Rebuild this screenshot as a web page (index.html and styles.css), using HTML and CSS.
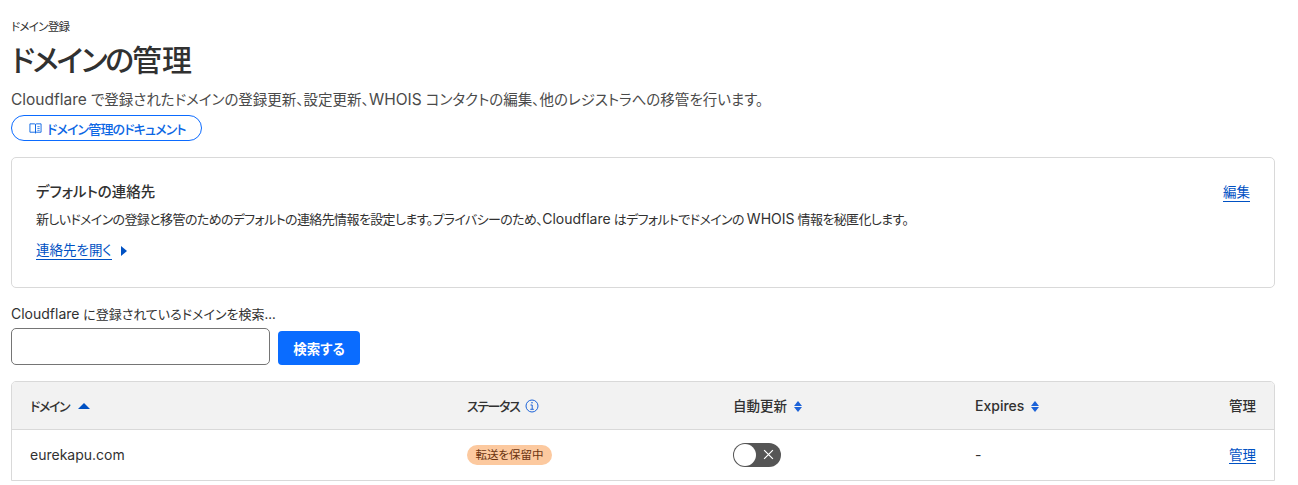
FILE: index.html
```html
<!DOCTYPE html>
<html lang="ja">
<head>
    <meta charset="UTF-8">
    <title>ドメインの管理</title>
    <link rel="stylesheet" href="styles.css">
</head>
<body>
    <p class="eyebrow">ドメイン登録</p>
    <h1><span class="kana">ドメインの</span>管理</h1>
    <p class="lead"><span class="en">Cloudflare</span> で登録されたドメインの登録更新、設定更新、<span class="en">WHOIS</span> コンタクトの編集、他のレジストラへの移管を行います。</p>
    <a class="doc-pill" href="#">
        <svg class="book-icon" viewBox="0 0 14 14" width="13" height="13" fill="none" stroke="#0b66e4" stroke-width="1">
            <path d="M1 2h5a1 1 0 0 1 1 1v9a1 1 0 0 0-1-1H1z"/>
            <path d="M13 2H8a1 1 0 0 0-1 1v9a1 1 0 0 1 1-1h5z"/>
            <path d="M9 5h2.500M9 7h2.500M9 9h2.500" stroke-width=".8"/>
        </svg>
        <span>ドメイン管理のドキュメント</span>
    </a>

    <section class="contact-card">
        <div class="contact-body">
            <h2>デフォルトの連絡先</h2>
            <p>新しいドメインの登録と移管のためのデフォルトの連絡先情報を設定します。プライバシーのため、<span class="en">Cloudflare</span> はデフォルトでドメインの <span class="en">WHOIS</span> 情報を秘匿化します。</p>
            <div class="open-row">
                <a class="link" href="#">連絡先を開く</a>
                <span class="caret-right"></span>
            </div>
        </div>
        <a class="link edit-link" href="#">編集</a>
    </section>

    <form class="search">
        <label for="domainSearch"><span class="en">Cloudflare</span> に登録されているドメインを検索...</label>
        <div class="search-row">
            <input id="domainSearch" type="text">
            <button type="button">検索する</button>
        </div>
    </form>

    <div class="table-wrap">
        <table>
            <colgroup>
                <col class="col-domain">
                <col class="col-status">
                <col class="col-renew">
                <col class="col-expires">
                <col>
            </colgroup>
            <thead>
                <tr>
                    <th><span class="kana">ドメイン</span> <span class="sort-up"></span></th>
                    <th><span class="kana">ステータス</span>
                        <svg class="info-icon" viewBox="0 0 14 14" width="14" height="14" fill="none" stroke="#1d63d8">
                            <circle cx="7" cy="7" r="6"/>
                            <path d="M5.500 6h1.700v4M5.300 10.300h3.500"/>
                            <circle cx="7" cy="3.800" r=".8" fill="#1d63d8" stroke="none"/>
                        </svg>
                    </th>
                    <th>自動更新 <span class="sort-both"></span></th>
                    <th><span class="en">Expires</span> <span class="sort-both"></span></th>
                    <th class="right">管理</th>
                </tr>
            </thead>
            <tbody>
                <tr>
                    <td>eurekapu.com</td>
                    <td><span class="badge">転送を保留中</span></td>
                    <td>
                        <span class="toggle">
                            <span class="knob"></span>
                            <svg viewBox="0 0 10 10" width="11" height="11" stroke="#fff" stroke-width="1.100"><path d="M1 1l8 8M9 1l-8 8"/></svg>
                        </span>
                    </td>
                    <td>-</td>
                    <td class="right"><a class="link" href="#">管理</a></td>
                </tr>
            </tbody>
        </table>
    </div>
</body>
</html>
```

FILE: styles.css
```css
* {
    box-sizing: border-box;
}

body {
    margin: 0;
    padding: 18px 23px 0 11px;
    font-family: 'Inter', 'Noto Sans CJK JP', sans-serif;
    font-feature-settings: "palt";
    font-size: 14px;
    color: #313131;
    background: #ffffff;
    height: 485px;
    overflow: hidden;
}

p, h1, h2 {
    margin: 0;
}

.en {
    font-size: 14px;
    letter-spacing: 0;
}

.eyebrow {
    font-size: 11.500px;
    line-height: 18px;
    letter-spacing: -0.7px;
}

h1 {
    font-size: 30px;
    font-weight: 500;
    line-height: 40px;
    margin-top: 4px;
}

h1 .kana {
    letter-spacing: -2.200px;
}

.lead {
    margin-top: 9px;
    font-size: 14.500px;
    line-height: 22px;
    color: #4a4a4a;
}

.lead .en {
    font-size: 15.500px;
}

.doc-pill {
    display: flex;
    align-items: center;
    gap: 5px;
    height: 26px;
    width: 191px;
    padding-left: 17px;
    margin-top: 4px;
    border: 1px solid #0b6bff;
    border-radius: 13px;
    color: #0b66e4;
    font-size: 13px;
    font-weight: 500;
    letter-spacing: -0.850px;
    text-decoration: none;
    white-space: nowrap;
}

.book-icon {
    flex-shrink: 0;
}

.contact-card {
    display: flex;
    justify-content: space-between;
    margin-top: 16px;
    height: 131px;
    padding: 24px 24px 0;
    border: 1px solid #d9d9d9;
    border-radius: 5px;
}

.contact-card h2 {
    font-size: 14.500px;
    font-weight: 500;
    line-height: 20px;
}

.contact-body p {
    margin-top: 7px;
    font-size: 13px;
    line-height: 20px;
    letter-spacing: -0.620px;
}

.open-row {
    display: flex;
    align-items: center;
    gap: 9px;
    margin-top: 12px;
}

.link {
    color: #0051c3;
    font-size: 13.500px;
    line-height: 18px;
    text-decoration: none;
    border-bottom: 1px solid #0051c3;
}

.edit-link {
    align-self: flex-start;
    margin-top: 1px;
}

.caret-right {
    width: 0;
    height: 0;
    border-left: 6px solid #0051c3;
    border-top: 5px solid transparent;
    border-bottom: 5px solid transparent;
}

.search {
    margin-top: 17px;
}

.search label {
    display: block;
    font-size: 13px;
    line-height: 18px;
}

.search-row {
    display: flex;
    align-items: flex-end;
    gap: 8px;
    margin-top: 5px;
}

.search-row input {
    width: 259px;
    height: 37px;
    border: 1px solid #757575;
    border-radius: 5px;
    outline: none;
}

.search-row button {
    width: 82px;
    height: 34px;
    border: none;
    border-radius: 4px;
    background: #0a6cff;
    color: #ffffff;
    font-family: inherit;
    font-feature-settings: inherit;
    font-size: 13.500px;
    font-weight: 700;
}

.table-wrap {
    margin-top: 16px;
    border: 1px solid #d9d9d9;
    border-radius: 5px 5px 0 0;
    overflow: hidden;
}

table {
    width: 100%;
    border-collapse: collapse;
    table-layout: fixed;
}

.col-domain {
    width: 437px;
}

.col-status {
    width: 266px;
}

.col-renew {
    width: 242px;
}

.col-expires {
    width: 200px;
}

th {
    height: 47px;
    padding: 0 18px;
    background: #f2f2f2;
    border-bottom: 1px solid #d9d9d9;
    font-size: 13.500px;
    font-weight: 500;
    text-align: left;
    white-space: nowrap;
}

th .kana {
    font-size: 13px;
    letter-spacing: -1.400px;
}

td {
    height: 51px;
    padding: 0 18px;
    font-size: 14px;
}

.right {
    text-align: right;
}

.sort-up {
    display: inline-block;
    margin-left: 5px;
    vertical-align: 2px;
    border-left: 6px solid transparent;
    border-right: 6px solid transparent;
    border-bottom: 6px solid #0051c3;
}

.sort-both {
    display: inline-block;
    position: relative;
    width: 9px;
    height: 11px;
    margin-left: 3px;
    vertical-align: -1px;
}

.sort-both::before,
.sort-both::after {
    content: "";
    position: absolute;
    left: 0;
    border-left: 4.500px solid transparent;
    border-right: 4.500px solid transparent;
}

.sort-both::before {
    top: 0;
    border-bottom: 5px solid #1d63d8;
}

.sort-both::after {
    bottom: 0;
    border-top: 5px solid #1d63d8;
}

.info-icon {
    vertical-align: -2px;
    margin-left: 2px;
}

.badge {
    display: inline-block;
    height: 20px;
    padding: 0 8.500px;
    border-radius: 10px;
    background: #fcc99f;
    color: #6b3410;
    font-size: 11.500px;
    line-height: 20px;
}

.toggle {
    display: inline-flex;
    align-items: center;
    gap: 7px;
    width: 48px;
    height: 24px;
    padding: 1px;
    vertical-align: middle;
    border-radius: 12px;
    background: #555555;
}

.knob {
    width: 22px;
    height: 22px;
    border-radius: 50%;
    background: #ffffff;
}
```
